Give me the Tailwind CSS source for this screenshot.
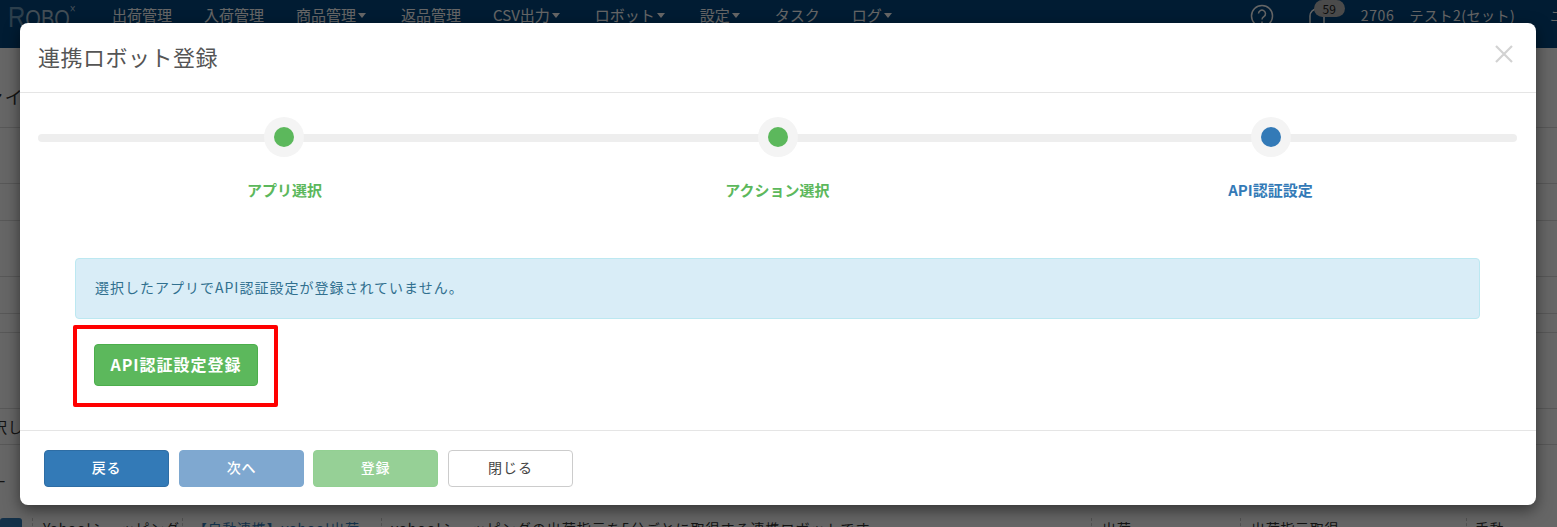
<!DOCTYPE html>
<html lang="ja">
<head>
<meta charset="utf-8">
<script src="https://cdn.jsdelivr.net/npm/@tailwindcss/browser@4"></script>
</head>
<body class="m-0 overflow-hidden bg-white">
<div class="relative h-[527px] w-[1557px] overflow-hidden bg-white font-['Noto_Sans_CJK_JP','Noto_Sans',sans-serif] text-[14px] tracking-[0.05em] text-[#333]">
  <!-- page behind -->
  <header class="flex h-[48px] items-start overflow-hidden bg-[#03467f] pl-[8px] pt-[3px] text-white">
    <div class="flex h-[40px] w-[104px] shrink-0 origin-top scale-y-[1.2] items-start font-['Liberation_Sans',sans-serif] font-normal text-[#a9c4d8]"><span class="text-[24px] leading-[24px] tracking-normal text-[#6f9dbe]">R</span><span class="text-[20px] leading-[26px] tracking-normal">OBO</span><span class="text-[10px] leading-[10px]">×</span></div>
    <nav class="flex shrink-0 gap-[32px] whitespace-nowrap text-[15px] leading-[24px] tracking-normal">
      <span>出荷管理</span><span>入荷管理</span><span class="flex items-center gap-[2px] pr-[3px]">商品管理<i class="mt-[1px] h-0 w-0 border-x-[4px] border-t-[5px] border-x-transparent border-t-white"></i></span><span>返品管理</span><span class="flex items-center gap-[2px] pr-[3px]">CSV出力<i class="mt-[1px] h-0 w-0 border-x-[4px] border-t-[5px] border-x-transparent border-t-white"></i></span><span class="flex items-center gap-[2px] pr-[3px]">ロボット<i class="mt-[1px] h-0 w-0 border-x-[4px] border-t-[5px] border-x-transparent border-t-white"></i></span><span class="flex items-center gap-[2px] pr-[3px]">設定<i class="mt-[1px] h-0 w-0 border-x-[4px] border-t-[5px] border-x-transparent border-t-white"></i></span><span>タスク</span><span class="flex items-center gap-[2px] pr-[3px]">ログ<i class="mt-[1px] h-0 w-0 border-x-[4px] border-t-[5px] border-x-transparent border-t-white"></i></span>
    </nav>
    <div class="ml-auto mr-[-8px] flex shrink-0 items-start whitespace-nowrap leading-[24px]">
      <svg width="24" height="24" viewBox="0 0 24 24" fill="none" stroke="#ffffff" stroke-width="1.5" class="mt-[1px]"><circle cx="12" cy="12" r="10.500"/><path d="M8.500 9.500a3.500 3.500 0 1 1 5.500 3c-1.300.800-2 1.500-2 3"/><path d="M12 17.500v1.500"/></svg>
      <div class="relative ml-[33px] h-[24px] w-[20px]">
        <svg width="20" height="28" viewBox="0 0 20 28" fill="none" stroke="#ffffff" stroke-width="1.5" class="mt-[2px]"><path d="M3 19v-8a7 7 0 0 1 14 0v8l2 2H1z"/></svg>
        <span class="absolute left-[7px] top-[-3px] h-[17px] w-[31px] rounded-full bg-[#bbb] text-center text-[12px] leading-[17px] tracking-normal text-[#222]">59</span>
      </div>
      <span class="ml-[34px]">2706</span>
      <span class="ml-[15px] tracking-[0.5px]">テスト2(セット)</span>
      <span class="ml-[35px]">ユ</span>
    </div>
  </header>
  <main class="relative h-[479px]">
    <div class="flex h-[80px] items-start border-b border-[#ddd] pt-[34px] text-[18px] leading-[28px]"><span class="ml-[-14px]">ァイ</span></div>
    <div class="h-[56px] border-b border-[#ddd]"></div>
    <div class="h-[37px] border-b border-[#ddd]"></div>
    <div class="h-[56px] border-b border-[#ddd]"></div>
    <div class="h-[37px] border-b border-[#ddd]"></div>
    <div class="h-[19px] border-b border-[#ddd]"></div>
    <div class="flex h-[76px] items-end border-b border-[#ddd]"></div>
    <div class="flex h-[36px] items-center border-b border-[#ddd] text-[15px]"><span class="ml-[-8px] leading-[20px]">択し</span></div>
    <div class="flex h-[73px] items-center"><span class="ml-[-8px]">ー</span></div>
    <div class="flex h-[60px] whitespace-nowrap leading-[20px]">
      <div class="w-[33px] shrink-0 border-r border-dashed border-[#ccc]"><div class="h-[30px] w-[22px] rounded-[3px] bg-[#337ab7]"></div></div>
      <div class="w-[150px] shrink-0 overflow-hidden border-r border-dashed border-[#ccc] pl-[10px]">Yahoo!ショッピング</div>
      <div class="w-[199px] shrink-0 overflow-hidden border-r border-dashed border-[#ccc] pl-[10px] text-[#337ab7]">【自動連携】yahoo!出荷</div>
      <div class="w-[710px] shrink-0 overflow-hidden border-r border-dashed border-[#ccc] pl-[9px] tracking-[1px]">yahoo!ショッピングの出荷指示を5分ごとに取得する連携ロボットです。</div>
      <div class="w-[149px] shrink-0 border-r border-dashed border-[#ccc] pl-[10px]">出荷</div>
      <div class="w-[226px] shrink-0 border-r border-dashed border-[#ccc] pl-[10px]">出荷指示取得</div>
      <div class="pl-[8px]">手動</div>
    </div>
  </main>

  <!-- backdrop -->
  <div class="absolute inset-0 bg-black/60"></div>

  <!-- modal -->
  <section class="absolute left-[20px] top-[23px] flex h-[482px] w-[1516px] flex-col rounded-[8px] bg-white shadow-[0_5px_15px_rgba(0,0,0,0.5)]">
    <div class="flex h-[70px] shrink-0 items-start justify-between border-b border-[#e5e5e5] pl-[18px] pr-[22px]">
      <h4 class="pt-[16px] text-[22px] font-normal leading-[34px] tracking-[0.5px] text-[#555]">連携ロボット登録</h4>
      <svg width="20" height="20" viewBox="0 0 20 20" fill="none" stroke="#d2d2d2" stroke-width="2.200" class="mt-[21px]"><path d="M2 2l16 16M18 2L2 18"/></svg>
    </div>
    <div class="flex-1 pl-[18px] pr-[19px]">
      <div class="relative mt-[24px] grid grid-cols-3">
        <div class="absolute left-0 right-0 top-[17px] h-[8px] rounded-full bg-[#eeeeee]"></div>
        <div class="relative flex flex-col items-center">
          <div class="mr-[1px] flex h-[40px] w-[40px] items-center justify-center rounded-full bg-[#f4f4f4]"><div class="h-[20px] w-[20px] rounded-full bg-[#5cb85c]"></div></div>
          <p class="mt-[23px] text-[15px] font-bold leading-[20px] tracking-normal text-[#5cb85c]">アプリ選択</p>
        </div>
        <div class="relative flex flex-col items-center">
          <div class="flex h-[40px] w-[40px] items-center justify-center rounded-full bg-[#f4f4f4]"><div class="h-[20px] w-[20px] rounded-full bg-[#5cb85c]"></div></div>
          <p class="mt-[23px] text-[15px] font-bold leading-[20px] tracking-normal text-[#5cb85c]">アクション選択</p>
        </div>
        <div class="relative flex flex-col items-center">
          <div class="flex h-[40px] w-[40px] items-center justify-center rounded-full bg-[#f4f4f4]"><div class="h-[20px] w-[20px] rounded-full bg-[#337ab7]"></div></div>
          <p class="mt-[23px] text-[15px] font-bold leading-[20px] tracking-normal text-[#337ab7]">API認証設定</p>
        </div>
      </div>
      <div class="ml-[37px] mr-[37px] mt-[58px] flex h-[61px] items-center rounded-[4px] border border-[#bce8f1] bg-[#d9edf7] pb-[3px] pl-[19px] leading-[20px] tracking-[1px] text-[#31708f]">選択したアプリでAPI認証設定が登録されていません。</div>
      <div class="ml-[35px] mt-[6px] inline-flex h-[82px] w-[205px] items-center rounded-[2px] border-4 border-[#ff0000] pb-[2px] pl-[17px]">
        <button class="h-[42px] w-[164px] rounded-[4px] border border-[#4cae4c] bg-[#5cb85c] pb-[2px] text-[16px] font-bold leading-[22px] tracking-[1px] text-white">API認証設定登録</button>
      </div>
    </div>
    <div class="flex h-[75px] shrink-0 items-start gap-[10px] border-t border-[#e5e5e5] pl-[24px] pt-[19px]">
      <button class="h-[37px] w-[125px] rounded-[4px] border border-[#2e6da4] bg-[#337ab7] pb-[3px] font-medium leading-[20px] text-white">戻る</button>
      <button class="h-[37px] w-[125px] rounded-[4px] border border-[#7ea8d0] bg-[#7fa8d0] pb-[3px] font-medium leading-[20px] text-white">次へ</button>
      <button class="ml-[-1px] h-[37px] w-[125px] rounded-[4px] border border-[#92d092] bg-[#96d096] pb-[3px] font-medium leading-[20px] text-white">登録</button>
      <button class="h-[37px] w-[125px] rounded-[4px] border border-[#cccccc] bg-white pb-[3px] leading-[20px] tracking-[1px] text-[#444]">閉じる</button>
    </div>
  </section>
</div>
</body>
</html>
